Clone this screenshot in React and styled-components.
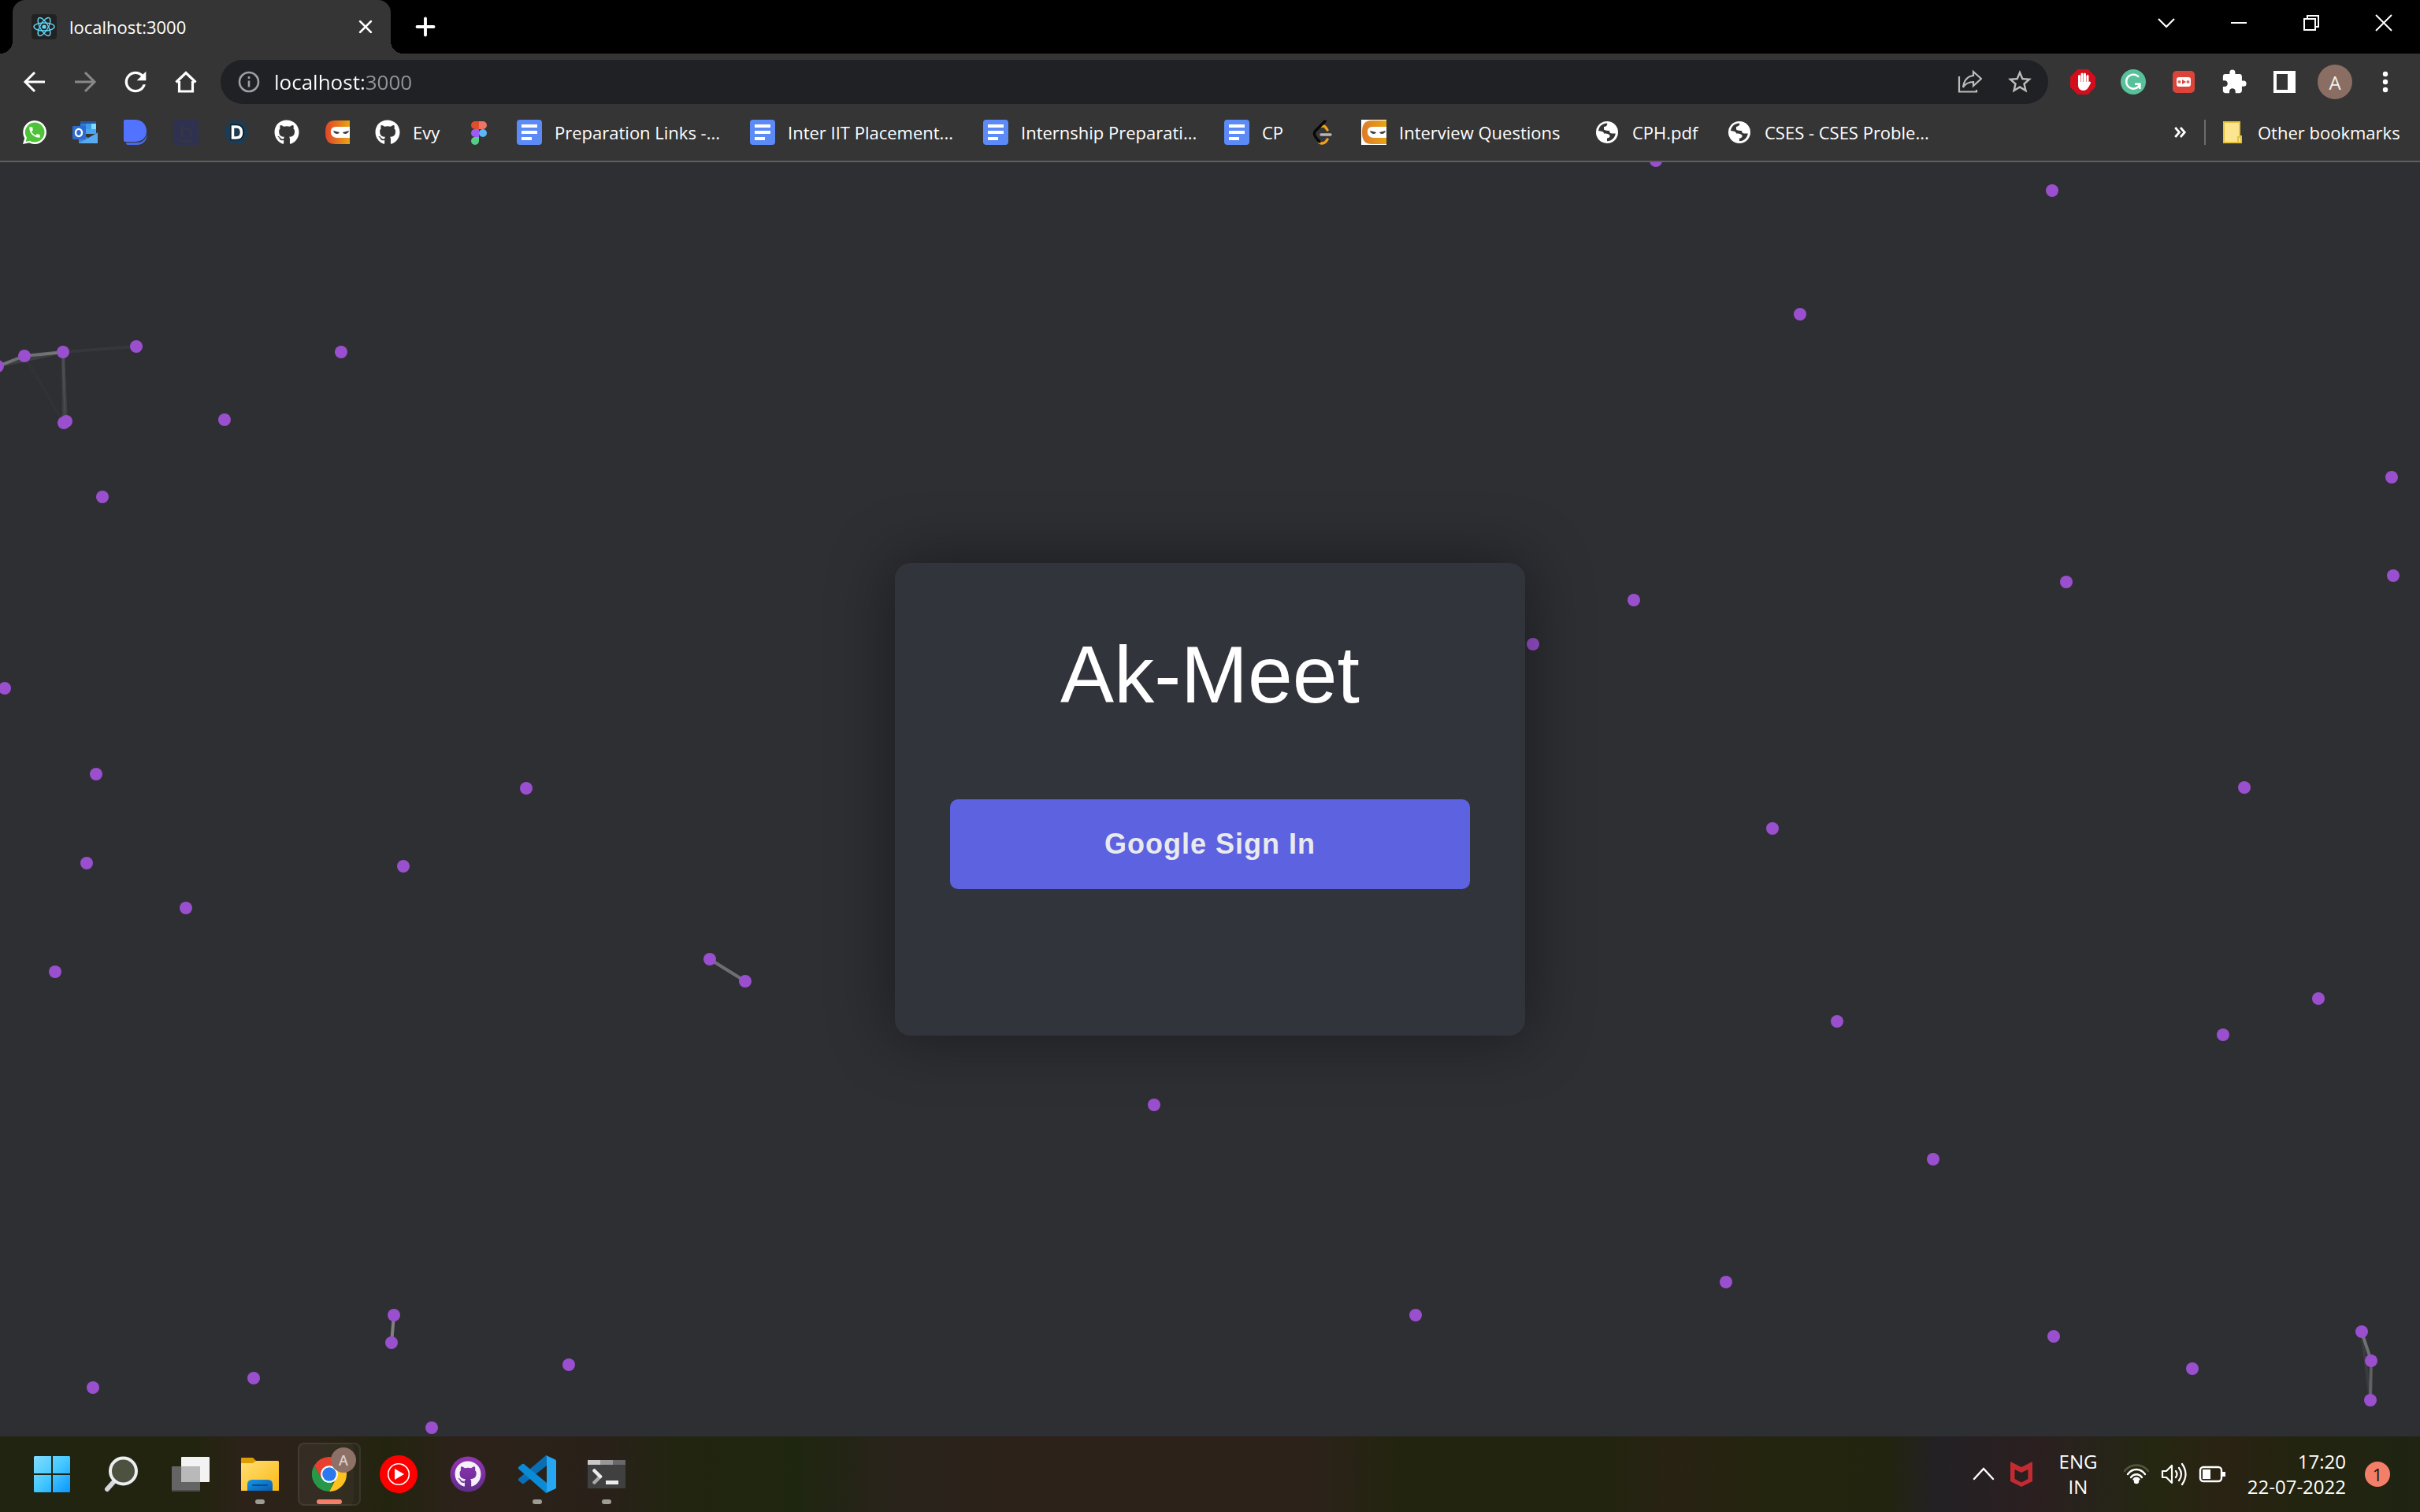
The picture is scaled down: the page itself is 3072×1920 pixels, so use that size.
import React from "react";
import styled, { createGlobalStyle } from "styled-components";
import { FaGithub, FaHand } from "react-icons/fa6";
import { MdExtension, MdPhone, MdRefresh, MdStarOutline } from "react-icons/md";

const GlobalStyle = createGlobalStyle`
  *, *::before, *::after { box-sizing: border-box; }
  body {
    margin: 0;
    background: #2e2f33;
    font-family: "Open Sans", "Noto Sans", sans-serif;
    font-size: 22px;
    color: #fff;
  }
  button, input { font: inherit; color: inherit; border: 0; padding: 0; margin: 0; background: none; }
  a { color: inherit; text-decoration: none; }
  svg { display: block; flex: none; }
`;

/* ---------- window ---------- */

const Screen = styled.div`
  display: flex;
  flex-direction: column;
  height: 100vh;
  overflow: hidden;
`;

const TabStrip = styled.header`
  display: flex;
  flex: none;
  height: 68px;
  padding-left: 16px;
  background: #000;
`;

const Tab = styled.div`
  position: relative;
  display: flex;
  align-items: center;
  gap: 16px;
  width: 480px;
  padding: 0 16px 0 24px;
  background: #353535;
  border-radius: 16px 16px 0 0;

  &::before, &::after {
    content: "";
    position: absolute;
    bottom: 0;
    width: 16px;
    height: 16px;
  }
  &::before { right: 100%; background: radial-gradient(circle at 0 0, transparent 16px, #353535 16px); }
  &::after { left: 100%; background: radial-gradient(circle at 100% 0, transparent 16px, #353535 16px); }
`;

const TabTitle = styled.span`
  flex: 1;
  line-height: 32px;
`;

const IconButton = styled.button`
  display: flex;
  flex: none;
  align-items: center;
  justify-content: center;
  width: ${(p) => p.$w || 48}px;
  height: ${(p) => p.$h || 48}px;
  color: ${(p) => p.$color || "#fff"};
`;

const NewTab = styled(IconButton)`
  align-self: center;
  margin-left: 20px;
`;

const WindowControls = styled.div`
  display: flex;
  margin-left: auto;
`;

const Toolbar = styled.nav`
  display: flex;
  flex: none;
  align-items: center;
  gap: 20px;
  height: 72px;
  padding: 0 20px;
  background: #353535;
`;

const ButtonGroup = styled.div`
  display: flex;
  align-items: center;
  gap: 16px;
`;

const Omnibox = styled.label`
  display: flex;
  flex: 1;
  align-items: center;
  gap: 16px;
  height: 56px;
  padding: 0 12px 0 20px;
  border-radius: 28px;
  background: #202124;
`;

const Address = styled.input`
  flex: 1;
  min-width: 0;
  height: 40px;
  outline: 0;
  font-size: 26px;
  background: linear-gradient(90deg, #fff 116px, #93969a 116px);
  -webkit-background-clip: text;
  background-clip: text;
  -webkit-text-fill-color: transparent;
`;

const Avatar = styled.span`
  display: flex;
  align-items: center;
  justify-content: center;
  width: 44px;
  height: 44px;
  border-radius: 50%;
  background: #8a6e63;
  font-size: 24px;
  color: #f2eeec;
`;

const BookmarksBar = styled.nav`
  display: flex;
  flex: none;
  align-items: center;
  gap: 32px;
  height: 66px;
  padding: 0 22px 8px 28px;
  border-bottom: 2px solid #5f6060;
  background: #353535;
`;

const Bookmark = styled.a`
  display: flex;
  flex: none;
  align-items: center;
  gap: 16px;
  height: 40px;
`;

const BookmarkLabel = styled.span`
  width: ${(p) => p.$w}px;
  line-height: 32px;
  white-space: nowrap;
`;

const BookmarksEnd = styled.div`
  display: flex;
  align-items: center;
  gap: 18px;
  margin-left: auto;
`;

const Divider = styled.span`
  width: 2px;
  height: 32px;
  background: #6b6b6b;
`;

/* ---------- sign-in page ---------- */

const Page = styled.main`
  position: relative;
  display: flex;
  flex: 1;
  align-items: center;
  justify-content: center;
  min-height: 0;
  background: #2e2f33;
  font-family: "Liberation Sans", Arial, sans-serif;
`;

const ParticleField = styled.svg`
  position: absolute;
  inset: 0;
  width: 100%;
  height: 100%;
`;

const Card = styled.section`
  position: relative;
  width: 800px;
  min-height: 600px;
  padding: 80px 70px;
  border-radius: 20px;
  background: #32343c;
  box-shadow: 0 0 80px 4px rgba(0, 0, 0, 0.4);
`;

const Title = styled.h1`
  margin: 0 0 96px;
  font-size: 102px;
  font-weight: 400;
  line-height: 124px;
  text-align: center;
`;

const SignIn = styled.button`
  display: block;
  width: 100%;
  height: 114px;
  border-radius: 10px;
  background: #5d62e0;
  color: #e9eaed;
  font-size: 36px;
  font-weight: 700;
  letter-spacing: 1px;
`;

/* ---------- taskbar ---------- */

const Taskbar = styled.footer`
  display: flex;
  flex: none;
  align-items: center;
  justify-content: space-between;
  height: 96px;
  padding: 0 38px 0 26px;
  background: linear-gradient(
    90deg,
    #212410 0%, #22240f 8%, #2c2219 10%, #2b2218 13%, #23240f 16%, #2c221a 19%,
    #292119 25%, #222510 28%, #1f2610 33%, #29231b 37%, #2c221a 42%, #2c221a 54%,
    #22240f 58%, #22240f 66%, #282213 69%, #24250f 73%, #22240f 78%, #232124 80%,
    #2b1f20 84%, #262419 87%, #252711 89%, #2a2213 92%, #22240f 95%, #1f2413 100%
  );
`;

const Apps = styled.div`
  display: flex;
  gap: 8px;
`;

const AppButton = styled.button`
  position: relative;
  display: flex;
  align-items: center;
  justify-content: center;
  width: 80px;
  height: 80px;
  border-radius: 8px;

  ${(p) => p.$active && `
    background: rgba(255, 255, 255, 0.05);
    box-shadow: inset 0 0 0 2px rgba(255, 255, 255, 0.07), inset -10px 0 0 -1px rgba(0, 0, 0, 0.12);
  `}

  &::after {
    content: "";
    position: absolute;
    bottom: 2px;
    height: 6px;
    border-radius: 3px;
    width: ${(p) => (p.$active ? 32 : p.$open ? 12 : 0)}px;
    background: ${(p) => (p.$active ? "#f47f68" : "#9d9c95")};
  }
`;

const ProfileBadge = styled.span`
  position: absolute;
  top: 6px;
  right: 6px;
  width: 32px;
  height: 32px;
  border-radius: 50%;
  background: #8d7066;
  color: #dccfca;
  font-size: 18px;
  font-weight: 600;
  line-height: 32px;
  text-align: center;
`;

const Tray = styled.div`
  display: flex;
  align-items: center;
  gap: 24px;
`;

const TrayGroup = styled.div`
  display: flex;
  align-items: center;
  gap: ${(p) => p.$gap}px;
`;

const TrayText = styled.button`
  width: ${(p) => p.$w}px;
  font-size: 24px;
  line-height: 32px;
  text-align: ${(p) => p.$align || "center"};
  white-space: nowrap;
`;

const Line = styled.span`
  display: block;
`;

const Notifications = styled.button`
  width: 32px;
  height: 32px;
  border-radius: 50%;
  background: #f47f68;
  color: #1c1310;
  font-size: 22px;
  line-height: 32px;
`;

/* ---------- icons ---------- */

const Stroke = ({ size = 32, w = 3, children, ...rest }) => (
  <svg width={size} height={size} viewBox="0 0 32 32" fill="none" stroke="currentColor" strokeWidth={w} {...rest}>
    {children}
  </svg>
);

const ReactIcon = () => (
  <svg width="32" height="32" viewBox="0 0 32 32">
    <rect width="32" height="32" rx="4" fill="#222" />
    <g fill="none" stroke="#61dafb" strokeWidth="1.4">
      <ellipse cx="16" cy="16" rx="13" ry="5" />
      <ellipse cx="16" cy="16" rx="13" ry="5" transform="rotate(60 16 16)" />
      <ellipse cx="16" cy="16" rx="13" ry="5" transform="rotate(120 16 16)" />
    </g>
    <circle cx="16" cy="16" r="2.6" fill="#61dafb" />
  </svg>
);

const WhatsAppIcon = () => (
  <svg width="32" height="32" viewBox="0 0 32 32">
    <path d="M16 1a15 15 0 1 1-7 28.300L1 31l2.200-7.500A15 15 0 0 1 16 1z" fill="#fff" />
    <path d="M16 3.500a12.500 12.500 0 1 1-6.300 23.300L4.600 28l1.400-5A12.500 12.500 0 0 1 16 3.500z" fill="#4fc23a" />
    <MdPhone x="7" y="7" size={18} color="#fff" />
  </svg>
);

const OutlookIcon = () => (
  <svg width="32" height="32" viewBox="0 0 32 32">
    <path d="M10 2h20v16H10z" fill="#2f7ad6" />
    <path d="M10 2h20v3H10z" fill="#2457a8" />
    <path d="M17 5h7v7h-7z" fill="#3d9be8" />
    <path d="M24 5h6v7h-6z" fill="#7ddcff" />
    <path d="M17 12h13v6H17z" fill="#4aa6ee" />
    <path d="M8 17l12 6 12-7v14H8z" fill="#3f86dc" />
    <path d="M8 30l24-13v13z" fill="#5aaaf0" />
    <rect y="8" width="17" height="17" rx="1" fill="#2c6bd0" />
    <ellipse cx="8" cy="16.500" rx="4" ry="4.600" fill="none" stroke="#fff" strokeWidth="2.400" />
  </svg>
);

const BlueDIcon = () => (
  <svg width="32" height="32" viewBox="0 0 32 32">
    <path d="M4 29h14c7 0 12-5 12.500-11 .8 8-5 14-12.500 14H6c-1.500 0-2-1.500-2-3z" fill="#4a68e8" />
    <path d="M3 0h12c9 0 15 6 15 14.500S24 28 15 28H3c-1.500 0-2-1-2-2V2c0-1 .5-2 2-2z" fill="#5273ff" />
  </svg>
);

const NavyHIcon = () => (
  <svg width="32" height="32" viewBox="0 0 32 32">
    <rect width="32" height="32" rx="3" fill="#2e3150" />
    <path d="M11 5v17M11 14c2-4 11-4 11 1v7M8 27h16" fill="none" stroke="#343647" strokeWidth="3.500" />
  </svg>
);

const HexDIcon = () => (
  <svg width="32" height="32" viewBox="0 0 32 32">
    <path d="M8 1h16l8 15-8 15H8L0 16z" fill="#1b3c54" />
    <path d="M11 8.500h5c5 0 7.500 3 7.500 7.500s-2.500 7.500-7.500 7.500h-5z" fill="none" stroke="#0c1b26" strokeWidth="5.500" />
    <path d="M11.500 9h4.500c4.500 0 6.500 2.600 6.500 7s-2 7-6.500 7h-4.500z" fill="none" stroke="#fff" strokeWidth="3.600" />
  </svg>
);

const NinjaIcon = ({ boxed }) => (
  <svg width="32" height="32" viewBox="0 0 32 32">
    <defs>
      <linearGradient id={boxed ? "ninjaBoxed" : "ninjaPlain"}>
        <stop offset="0" stopColor={boxed ? "#dc7a2a" : "#e0442a"} />
        <stop offset="1" stopColor="#e8a515" />
      </linearGradient>
    </defs>
    {boxed && <path d="M0 0h32v32H0z" fill="#fff" />}
    <path d="M14 1h18v30H14C5 31 1 27 1 16S5 1 14 1z" fill={`url(#${boxed ? "ninjaBoxed" : "ninjaPlain"})`} />
    <path d="M32 9H15c-6 0-7 3-7 6.500S10 23 16 23h16z" fill="#fff" />
    <path d="M11 14l8 2c-1 3-7 2.500-8-2zM31 14l-8 2c1 3 7 2.500 8-2z" fill="#3b3b3b" />
  </svg>
);

const FigmaIcon = () => (
  <svg width="32" height="32" viewBox="0 0 32 32">
    <path d="M16 2h-5a5 5 0 0 0 0 10h5z" fill="#e04e2b" />
    <path d="M16 2h5a5 5 0 0 1 0 10h-5z" fill="#ef7468" />
    <path d="M16 12h-5a5 5 0 0 0 0 10h5z" fill="#9b5cf6" />
    <circle cx="21" cy="17" r="5" fill="#5ab8f7" />
    <path d="M11 22h5v5a5 5 0 1 1-5-5z" fill="#55cf85" />
  </svg>
);

const DocsIcon = () => (
  <svg width="32" height="32" viewBox="0 0 32 32">
    <rect width="32" height="32" rx="4" fill="#5c8bf7" />
    <path d="M6 8h20M6 16h20M6 24h13" stroke="#fff" strokeWidth="4" />
  </svg>
);

const LeetCodeIcon = () => (
  <svg width="32" height="32" viewBox="0 0 32 32" fill="none" strokeLinecap="round" strokeWidth="3.400">
    <path d="M14 8.500c2-1.500 4-.5 7 4.500" stroke="#f2a01c" />
    <path d="M11 29c4 2.500 8 0 10-4" stroke="#f2a01c" />
    <path d="M18 2L6 14c-2 2-2 5 0 8l5 6" stroke="#080808" />
    <path d="M13 19h12" stroke="#b5b5b5" />
  </svg>
);

const GlobeIcon = () => (
  <svg width="32" height="32" viewBox="0 0 32 32">
    <circle cx="16" cy="16" r="14" fill="#fff" />
    <path d="M5 14C6 8 10 5 16 4.600c1 2-1 4-4 4.400v3.500c1 1 5 1.500 7 1.500 0 2 1 3.500 3 3.500h4.800C26 23 22 27 16 27.300v-3.800c3 0 4-2 3.500-3.500-1-2-4-2.500-7.500-2.500C12 15 9 14.500 5 14z" fill="#353535" />
  </svg>
);

const FolderIcon = () => (
  <svg width="32" height="32" viewBox="0 0 32 32">
    <path d="M5 3h20v18h2v8H5z" fill="#fbe590" stroke="#e5c33a" strokeWidth="2" />
    <path d="M23 29v-7h3" fill="none" stroke="#e5c33a" strokeWidth="2" />
  </svg>
);

const ShareIcon = () => (
  <Stroke w={2.2}>
    <path d="M3 9v19.500h22V26" />
    <path d="M21 3l10 9-10 9v-5c-6 0-10 2-13 7 1-8 5-14 13-15z" />
  </Stroke>
);

const AdblockIcon = () => (
  <svg width="32" height="32" viewBox="0 0 32 32">
    <path d="M9.500 0h13L32 9.500v13L22.500 32h-13L0 22.500v-13z" fill="#d40d1c" />
    <g fill="#fff" stroke="#fff" strokeLinecap="round" strokeWidth="3">
      <path d="M11.500 8.500V17M15 6v11M18.500 6v11M22 8.500V18" />
      <path d="M10 16h13.500v4c0 4-3 7-7 7s-6.500-3-6.500-7zM23 20l2-4" stroke="none" />
      <path d="M22.500 21l2-4" />
    </g>
  </svg>
);

const GrammarlyIcon = () => (
  <svg width="32" height="32" viewBox="0 0 32 32">
    <circle cx="16" cy="16" r="16" fill="#57c29a" />
    <path d="M23 9.800A9 9 0 1 0 24.500 19M18 18.700h6.500V25" fill="none" stroke="#fff" strokeWidth="2.400" />
  </svg>
);

const RecorderIcon = () => (
  <svg width="32" height="32" viewBox="0 0 32 32">
    <rect x="2" y="2" width="28" height="28" rx="5" fill="#dc443a" />
    <rect x="7" y="10" width="18" height="12" rx="3" fill="#fff" />
    <path d="M14 13l5 3-5 3z" fill="#dc443a" />
    <circle cx="10.500" cy="16" r="2" fill="#dc6a62" />
    <circle cx="21.500" cy="16" r="2" fill="#dc6a62" />
  </svg>
);

const SidePanelIcon = () => (
  <svg width="28" height="28" viewBox="0 0 28 28">
    <path fillRule="evenodd" d="M0 0h28v28H0zM4 4v20h14V4z" fill="#fff" />
  </svg>
);

const DotsIcon = () => (
  <svg width="8" height="28" viewBox="0 0 8 28" fill="#fff">
    <circle cx="4" cy="4" r="3.200" />
    <circle cx="4" cy="14" r="3.200" />
    <circle cx="4" cy="24" r="3.200" />
  </svg>
);

const WindowsIcon = () => (
  <svg width="46" height="46" viewBox="0 0 46 46">
    <defs>
      <linearGradient id="win" x1="0" y1="0" x2="46" y2="46" gradientUnits="userSpaceOnUse">
        <stop offset="0" stopColor="#82dcff" />
        <stop offset=".5" stopColor="#45c8ff" />
        <stop offset="1" stopColor="#0a96ff" />
      </linearGradient>
    </defs>
    <path d="M1 0h21v22H0V1zM24 0h21l1 1v21H24zM0 24h22v22H1l-1-1zM24 24h22v21l-1 1H24z" fill="url(#win)" />
  </svg>
);

const SearchIcon = () => (
  <svg width="44" height="46" viewBox="0 0 44 46">
    <path d="M13 32L4 42" stroke="#d5d8de" strokeWidth="6" strokeLinecap="round" />
    <circle cx="24.500" cy="19" r="16.500" fill="#4d5140" stroke="#eceef2" strokeWidth="4" />
  </svg>
);

const TaskViewIcon = () => (
  <svg width="48" height="44" viewBox="0 0 48 44">
    <rect x="12" width="36" height="32" rx="1" fill="#f3f3f3" />
    <rect y="12" width="36" height="32" rx="1" fill="#646464" />
    <path d="M12 12h24v20H12z" fill="#b9b9b9" />
    <path d="M0 42h36v2H0z" fill="#4c4c4c" />
  </svg>
);

const ExplorerIcon = () => (
  <svg width="48" height="44" viewBox="0 0 48 44">
    <defs>
      <linearGradient id="folder" x2="1" y2="1">
        <stop offset="0" stopColor="#ffdf75" />
        <stop offset="1" stopColor="#fbb914" />
      </linearGradient>
      <linearGradient id="tray" x2="1" y2="1">
        <stop offset="0" stopColor="#1596e6" />
        <stop offset="1" stopColor="#0a5cae" />
      </linearGradient>
    </defs>
    <path d="M0 2q0-1 1-1h14l5 5v8H0z" fill="#dd9b04" />
    <path d="M0 8h15l4-3h28l1 1v37H0z" fill="url(#folder)" />
    <path d="M8 43V35q0-6 6-6h20q6 0 6 6v8z" fill="url(#tray)" />
    <path d="M15 36h18" stroke="#0a4a90" strokeWidth="2" strokeLinecap="round" />
  </svg>
);

const ChromeIcon = () => (
  <svg width="44" height="44" viewBox="0 0 44 44">
    <path d="M22 22h9.500L22 44A22 22 0 0 1 2.900 11l9.600 16.500z" fill="#279847" />
    <path d="M22 12h19.500A22 22 0 0 0 2.900 11l9.600 16.500z" fill="#e8402f" />
    <path d="M30.700 27L22 44A22 22 0 0 0 41.600 12H22z" fill="#fcc31e" />
    <circle cx="22" cy="22" r="10.800" fill="#fff" />
    <circle cx="22" cy="22" r="8.800" fill="#2b79ef" />
  </svg>
);

const YouTubeMusicIcon = () => (
  <svg width="48" height="48" viewBox="0 0 48 48">
    <circle cx="24" cy="24" r="24" fill="#f00" />
    <circle cx="24" cy="24" r="13.300" fill="none" stroke="#fff" strokeWidth="1.600" />
    <path d="M19 17v14l12-7z" fill="#fff" />
  </svg>
);

const GitHubDesktopIcon = () => (
  <svg width="46" height="46" viewBox="0 0 46 46">
    <defs>
      <linearGradient id="ghd" x2="0" y2="1">
        <stop offset="0" stopColor="#9634b4" />
        <stop offset="1" stopColor="#5f2d8c" />
      </linearGradient>
    </defs>
    <circle cx="23" cy="23" r="22.500" fill="url(#ghd)" />
    <FaGithub x="6" y="6" size={34} color="#f4f1f8" />
  </svg>
);

const VSCodeIcon = () => (
  <svg width="48" height="48" viewBox="0 0 48 48">
    <path d="M0 32l5 4q1 .6 2 0L36 13V0q-1 0-2 1L1 29q-2 1.500-1 3z" fill="#0a6eb4" />
    <path d="M0 15l5-4q1-.600 2 0l29 24v13q-1 0-2-1L1 18q-2-1.500-1-3z" fill="#0b8ad6" />
    <path d="M35 0l12 5.500q1 .5 1 2v33q0 1.500-1 2L35 48q1-1 1-3V3q0-2-1-3z" fill="#27a7f2" />
  </svg>
);

const TerminalIcon = () => (
  <svg width="48" height="36" viewBox="0 0 48 36">
    <rect width="48" height="36" rx="1" fill="#404040" />
    <path d="M0 0h16v6H0z" fill="#cacaca" />
    <path d="M16 0h16v6H16z" fill="#989898" />
    <path d="M32 0h16v6H32z" fill="#686868" />
    <path d="M16 21l-7.500 7.500" stroke="#ababab" strokeWidth="4.500" strokeLinecap="round" />
    <path d="M8.500 13.500L16 21" stroke="#ececec" strokeWidth="4.500" strokeLinecap="round" />
    <path d="M23 26h16v5H23z" fill="#ececec" />
  </svg>
);

const McAfeeIcon = () => (
  <svg width="32" height="32" viewBox="0 0 32 32">
    <path fillRule="evenodd" d="M2 0l14 7 14-7v25l-14 7-14-7zM7.500 10v12l8.500 4.500 8.500-4.500V10L16 14z" fill="#c22b2f" />
  </svg>
);

const WifiIcon = () => (
  <svg width="36" height="32" viewBox="0 0 36 32" fill="none" stroke="#fff" strokeWidth="2.400" strokeLinecap="round">
    <path d="M3 12C11 2 25 2 33 12" stroke="#56573f" />
    <path d="M7 16c6-8 16-8 22 0M11 20c4-5 10-5 14 0" />
    <circle cx="18" cy="25" r="2" fill="#fff" />
    <path d="M14.500 22.500c2-2.400 5-2.400 7 0" />
  </svg>
);

const VolumeIcon = () => (
  <svg width="36" height="32" viewBox="0 0 36 32" fill="none" stroke="#fff" strokeWidth="2.200" strokeLinecap="round" strokeLinejoin="round">
    <path d="M3 12h5l7-7v22l-7-7H3z" />
    <path d="M20 12q3 4 0 8M24 8q6 8 0 16M28 3q9 13 0 26" />
  </svg>
);

const BatteryIcon = () => (
  <svg width="36" height="32" viewBox="0 0 36 32">
    <rect x="3" y="7" width="27" height="18" rx="4" fill="none" stroke="#fff" strokeWidth="2.400" />
    <path d="M6 10h10v12H6zM31 13h4v6h-4z" fill="#fff" />
  </svg>
);

/* ---------- data ---------- */

const bookmarks = [
  { name: "WhatsApp", icon: <WhatsAppIcon /> },
  { name: "Outlook", icon: <OutlookIcon /> },
  { name: "D", icon: <BlueDIcon /> },
  { name: "Hack", icon: <NavyHIcon /> },
  { name: "Docs", icon: <HexDIcon /> },
  { name: "GitHub", icon: <FaGithub size={32} /> },
  { name: "Coding", icon: <NinjaIcon /> },
  { name: "Evy", icon: <FaGithub size={32} />, label: "Evy", width: 36 },
  { name: "Figma", icon: <FigmaIcon /> },
  { name: "Preparation Links", icon: <DocsIcon />, label: "Preparation Links -...", width: 216 },
  { name: "Inter IIT Placement", icon: <DocsIcon />, label: "Inter IIT Placement...", width: 216 },
  { name: "Internship Preparation", icon: <DocsIcon />, label: "Internship Preparati...", width: 226 },
  { name: "CP", icon: <DocsIcon />, label: "CP", width: 30 },
  { name: "LeetCode", icon: <LeetCodeIcon /> },
  { name: "Interview Questions", icon: <NinjaIcon boxed />, label: "Interview Questions", width: 216 },
  { name: "CPH", icon: <GlobeIcon />, label: "CPH.pdf", width: 88 },
  { name: "CSES", icon: <GlobeIcon />, label: "CSES - CSES Proble...", width: 226 },
];

const apps = [
  { name: "Start", icon: <WindowsIcon /> },
  { name: "Search", icon: <SearchIcon /> },
  { name: "Task View", icon: <TaskViewIcon /> },
  { name: "File Explorer", icon: <ExplorerIcon />, open: true },
  { name: "Chrome", icon: <ChromeIcon />, active: true },
  { name: "YouTube Music", icon: <YouTubeMusicIcon /> },
  { name: "GitHub Desktop", icon: <GitHubDesktopIcon /> },
  { name: "Visual Studio Code", icon: <VSCodeIcon />, open: true },
  { name: "Terminal", icon: <TerminalIcon />, open: true },
];

const particles = [
  [2102, -2], [2605, 36], [2285, 193], [-3, 259], [31, 246], [80, 241], [173, 234], [84, 329], [81, 331],
  [433, 241], [285, 327], [130, 425], [6, 668], [122, 777], [110, 890], [668, 795], [512, 894],
  [236, 947], [70, 1028], [901, 1012], [946, 1040], [1465, 1197], [500, 1464], [497, 1499],
  [722, 1527], [322, 1544], [118, 1556], [548, 1607], [1797, 1464], [2191, 1422], [2454, 1266],
  [2332, 1091], [2250, 846], [2849, 794], [2943, 1062], [2822, 1108], [2607, 1491], [2783, 1532],
  [2998, 1485], [3010, 1522], [3009, 1572], [3036, 400], [3038, 525], [2623, 533], [2074, 556], [1946, 612],
];

const links = [
  [-3, 259, 31, 246, 0.4], [31, 246, 80, 241, 0.4], [-3, 259, 80, 241, 0.1], [80, 241, 173, 234, 0.05],
  [80, 241, 84, 329, 0.1], [80, 241, 81, 331, 0.1], [31, 246, 81, 331, 0.02],
  [901, 1012, 946, 1040, 0.4], [500, 1464, 497, 1499, 0.5], [2998, 1485, 3010, 1522, 0.4],
  [3010, 1522, 3009, 1572, 0.3], [2998, 1485, 3009, 1572, 0.08],
];

export default function App() {
  return (
    <>
      <GlobalStyle />
      <Screen>
        <TabStrip>
          <Tab>
            <ReactIcon />
            <TabTitle>localhost:3000</TabTitle>
            <IconButton $w={32} $h={32} aria-label="Close tab">
              <Stroke size={20} w={4.4} strokeLinecap="round"><path d="M5 5l22 22M27 5L5 27" /></Stroke>
            </IconButton>
          </Tab>
          <NewTab aria-label="New tab">
            <Stroke size={28} w={4.4} strokeLinecap="round"><path d="M16 4v24M4 16h24" /></Stroke>
          </NewTab>
          <WindowControls>
            <IconButton $w={92} $h={58} aria-label="Search tabs">
              <Stroke w={2.2}><path d="M6 11l10 10 10-10" /></Stroke>
            </IconButton>
            <IconButton $w={92} $h={58} aria-label="Minimize">
              <Stroke w={2}><path d="M6 16h20" /></Stroke>
            </IconButton>
            <IconButton $w={92} $h={58} aria-label="Restore">
              <Stroke w={2}><path d="M7 11h14v14H7zM11 11V7h14v14h-4" /></Stroke>
            </IconButton>
            <IconButton $w={92} $h={58} aria-label="Close">
              <Stroke w={2}><path d="M6 6l20 20M26 6L6 26" /></Stroke>
            </IconButton>
          </WindowControls>
        </TabStrip>

        <Toolbar aria-label="Browser toolbar">
          <ButtonGroup>
            <IconButton aria-label="Back"><Stroke><path d="M29 16H5M16 4L4 16l12 12" /></Stroke></IconButton>
            <IconButton aria-label="Forward" $color="#888"><Stroke><path d="M3 16h24M16 4l12 12-12 12" /></Stroke></IconButton>
            <IconButton aria-label="Reload"><MdRefresh size={40} /></IconButton>
            <IconButton aria-label="Home">
              <Stroke w={3.2}><path d="M7.500 15v13h17V15M3.500 16.500L16 4.500l12.500 12" /></Stroke>
            </IconButton>
          </ButtonGroup>
          <Omnibox>
            <Stroke w={2.6} color="#9aa0a6"><circle cx="16" cy="16" r="12" /><path d="M16 14.500v8M16 9v3" /></Stroke>
            <Address aria-label="Address" defaultValue="localhost:3000" />
            <ButtonGroup>
              <IconButton aria-label="Share" $color="#bdbdbd"><ShareIcon /></IconButton>
              <IconButton aria-label="Bookmark this page" $color="#bdbdbd"><MdStarOutline size={36} /></IconButton>
            </ButtonGroup>
          </Omnibox>
          <ButtonGroup>
            <IconButton aria-label="AdBlock"><AdblockIcon /></IconButton>
            <IconButton aria-label="Grammarly"><GrammarlyIcon /></IconButton>
            <IconButton aria-label="Recorder"><RecorderIcon /></IconButton>
            <IconButton aria-label="Extensions"><MdExtension size={34} /></IconButton>
            <IconButton aria-label="Side panel"><SidePanelIcon /></IconButton>
            <IconButton aria-label="Profile"><Avatar>A</Avatar></IconButton>
            <IconButton aria-label="Menu"><DotsIcon /></IconButton>
          </ButtonGroup>
        </Toolbar>

        <BookmarksBar aria-label="Bookmarks">
          {bookmarks.map((b) => (
            <Bookmark key={b.name} href="#" aria-label={b.label ? undefined : b.name}>
              {b.icon}
              {b.label && <BookmarkLabel $w={b.width}>{b.label}</BookmarkLabel>}
            </Bookmark>
          ))}
          <BookmarksEnd>
            <IconButton $w={24} $h={32} aria-label="More bookmarks">
              <Stroke size={24} w={3.6}><path d="M7 8l7 8-7 8M16 8l7 8-7 8" /></Stroke>
            </IconButton>
            <Divider />
            <Bookmark href="#">
              <FolderIcon />
              <BookmarkLabel $w={184}>Other bookmarks</BookmarkLabel>
            </Bookmark>
          </BookmarksEnd>
        </BookmarksBar>

        <Page>
          <ParticleField viewBox="0 0 3072 1618" preserveAspectRatio="xMidYMid slice" aria-hidden="true">
            {links.map(([x1, y1, x2, y2, o]) => (
              <line key={`${x1}-${x2}-${y2}`} x1={x1} y1={y1} x2={x2} y2={y2} stroke="#d0d0d0" strokeOpacity={o} strokeWidth="4" />
            ))}
            {particles.map(([x, y]) => (
              <circle key={`${x}-${y}`} cx={x} cy={y} r="8" fill="#9a4fcf" />
            ))}
          </ParticleField>
          <Card>
            <Title>Ak-Meet</Title>
            <SignIn>Google Sign In</SignIn>
          </Card>
        </Page>

        <Taskbar>
          <Apps>
            {apps.map((a) => (
              <AppButton key={a.name} aria-label={a.name} $open={a.open} $active={a.active}>
                {a.icon}
                {a.active && <ProfileBadge>A</ProfileBadge>}
              </AppButton>
            ))}
          </Apps>
          <Tray>
            <TrayGroup $gap={16}>
              <IconButton $w={32} aria-label="Show hidden icons">
                <Stroke w={2.4} strokeLinecap="round"><path d="M4 22L16 9l12 13" /></Stroke>
              </IconButton>
              <IconButton $w={32} aria-label="McAfee"><McAfeeIcon /></IconButton>
            </TrayGroup>
            <TrayText $w={64}>
              <Line>ENG</Line>
              <Line>IN</Line>
            </TrayText>
            <TrayGroup $gap={12}>
              <WifiIcon />
              <VolumeIcon />
              <BatteryIcon />
            </TrayGroup>
            <TrayText $w={128} $align="right">
              <Line>17:20</Line>
              <Line>22-07-2022</Line>
            </TrayText>
            <Notifications aria-label="1 notification">1</Notifications>
          </Tray>
        </Taskbar>
      </Screen>
    </>
  );
}
